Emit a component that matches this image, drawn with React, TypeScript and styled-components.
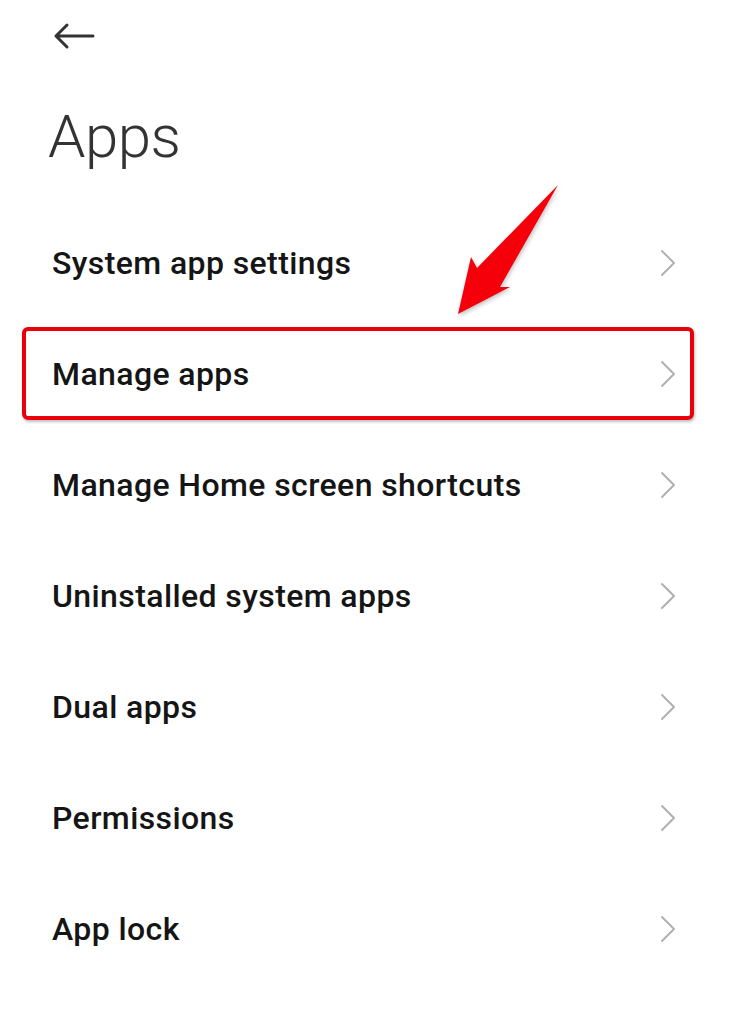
import React from 'react'
import styled, { createGlobalStyle } from 'styled-components'

const GlobalStyle = createGlobalStyle`
  html, body {
    margin: 0;
    padding: 0;
    background: #fff;
  }
  body {
    font-family: Roboto, 'Noto Sans', 'Liberation Sans', sans-serif;
  }
`

const Screen = styled.div`
  position: relative;
  width: 729px;
  height: 1024px;
  background: #fff;
  overflow: hidden;
`

const Header = styled.div`
  padding: 22px 0 0 53px;
  height: 28px;
`

const BackButton = styled.button`
  display: block;
  padding: 0;
  border: 0;
  background: none;
  width: 42px;
  height: 28px;
  cursor: pointer;
`

const Title = styled.h1`
  margin: 57px 0 0 48px;
  font-size: 60px;
  line-height: 60px;
  font-weight: 300;
  color: #333;
  letter-spacing: -0.5px;
`

const List = styled.ul`
  list-style: none;
  margin: 40px 0 0;
  padding: 0;
`

const Row = styled.li<{ $highlighted?: boolean }>`
  position: relative;
  height: 111px;
  display: flex;
  align-items: center;
  justify-content: space-between;
  padding: 0 52px;

  ${({ $highlighted }) =>
    $highlighted &&
    `
    &::after {
      content: '';
      position: absolute;
      left: 22px;
      right: 35px;
      top: 9px;
      bottom: 9px;
      border: 4.5px solid #e8000b;
      border-radius: 6px;
      box-shadow: 1px 2px 3px rgba(0, 0, 0, 0.25);
      pointer-events: none;
    }
  `}
`

const Label = styled.span`
  font-size: 32px;
  font-weight: 500;
  letter-spacing: 0.4px;
  color: #151515;
`

const Chevron = styled.svg`
  width: 16px;
  height: 28px;
  margin-right: 1px;
  flex-shrink: 0;
`

const Pointer = styled.svg`
  position: absolute;
  left: 450px;
  top: 180px;
  width: 115px;
  height: 140px;
  filter: drop-shadow(1px 2px 2px rgba(0, 0, 0, 0.25));
`

const items = [
  'System app settings',
  'Manage apps',
  'Manage Home screen shortcuts',
  'Uninstalled system apps',
  'Dual apps',
  'Permissions',
  'App lock',
]

export default function App() {
  return (
    <Screen>
      <GlobalStyle />
      <Header>
        <BackButton aria-label="Back">
          <svg width="42" height="28" viewBox="0 0 42 28" fill="none">
            <path d="M3 14H40M3 14L14 3M3 14L14 25" stroke="#333" strokeWidth="3" strokeLinecap="round" strokeLinejoin="round" />
          </svg>
        </BackButton>
      </Header>
      <Title>Apps</Title>
      <List>
        {items.map((item) => (
          <Row key={item} $highlighted={item === 'Manage apps'}>
            <Label>{item}</Label>
            <Chevron viewBox="0 0 16 28" fill="none">
              <path d="M2 2L14 14L2 26" stroke="#b0b0b0" strokeWidth="2" strokeLinecap="round" strokeLinejoin="round" />
            </Chevron>
          </Row>
        ))}
      </List>
      {/* annotation arrow */}
      <Pointer viewBox="450 180 115 140">
        <path
          d="M558 185 L500 287 L510 287 L458 314 L471 257 L477 268 Z"
          fill="#f5000a"
        />
      </Pointer>
    </Screen>
  )
}
